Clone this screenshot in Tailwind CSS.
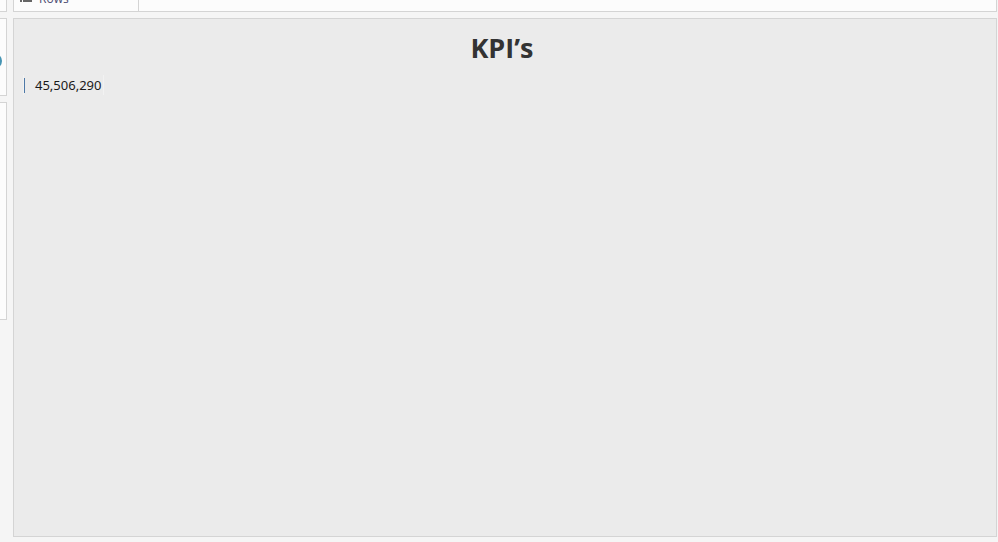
<!DOCTYPE html>
<html lang="en">
<head>
<meta charset="utf-8">
<title>KPI’s</title>
<script src="https://cdn.jsdelivr.net/npm/@tailwindcss/browser@4"></script>
</head>
<body class="flex h-screen gap-1.5 overflow-hidden bg-[#f5f5f5] pr-px font-['Open_Sans','Noto_Sans',sans-serif]">
  <aside class="flex w-[7px] shrink-0 flex-col gap-1.5">
    <div class="h-3 border-r border-b border-[#d4d4d4] bg-[#fcfcfc]"></div>
    <div class="flex h-[78px] items-center overflow-hidden border border-l-0 border-[#d4d4d4] bg-[#fcfcfc] pt-2">
      <svg class="h-4 w-[2px] shrink-0" viewBox="0 0 2 16" aria-hidden="true"><circle cx="-6" cy="8" r="8" fill="#4594b3"/></svg>
    </div>
    <div class="h-[218px] border border-l-0 border-[#d4d4d4] bg-[#fcfcfc]"></div>
  </aside>
  <main class="flex min-w-0 flex-1 flex-col gap-1.5 pb-[5px]">
    <div class="flex h-3 shrink-0 items-end overflow-hidden border border-t-0 border-[#d4d4d4] bg-[#fcfcfc]">
      <div class="flex h-5 w-[125px] shrink-0 items-start gap-[7px] border-r border-[#d4d4d4] pl-1.5">
        <svg class="h-3 w-3 shrink-0" viewBox="0 0 12 12" fill="#666" aria-hidden="true"><path d="M0 1h2v2H0zM3 1h9v2H3zM0 5h2v2H0zM3 5h9v2H3zM0 9h2v2H0zM3 9h9v2H3z"/></svg>
        <span class="text-[12px] leading-4 text-[#4a4a70]">Rows</span>
      </div>
    </div>
    <section class="min-h-0 flex-1 border border-[#d4d4d4] bg-[#ebebeb]">
      <h1 class="pt-3 pr-1.5 text-center text-[27px] leading-[34px] font-bold text-[#333]">KPI’s</h1>
      <div class="mt-2.5 ml-[9px] flex h-5 w-[81px] items-center border-x border-[#f2f2f2]">
        <div class="h-[15px] w-px bg-[#4e79a7]"></div>
        <span class="pl-[10px] font-['Noto_Sans',sans-serif] text-[13px] leading-5 text-[#1a1a1a]">45,506,290</span>
      </div>
    </section>
  </main>
</body>
</html>
